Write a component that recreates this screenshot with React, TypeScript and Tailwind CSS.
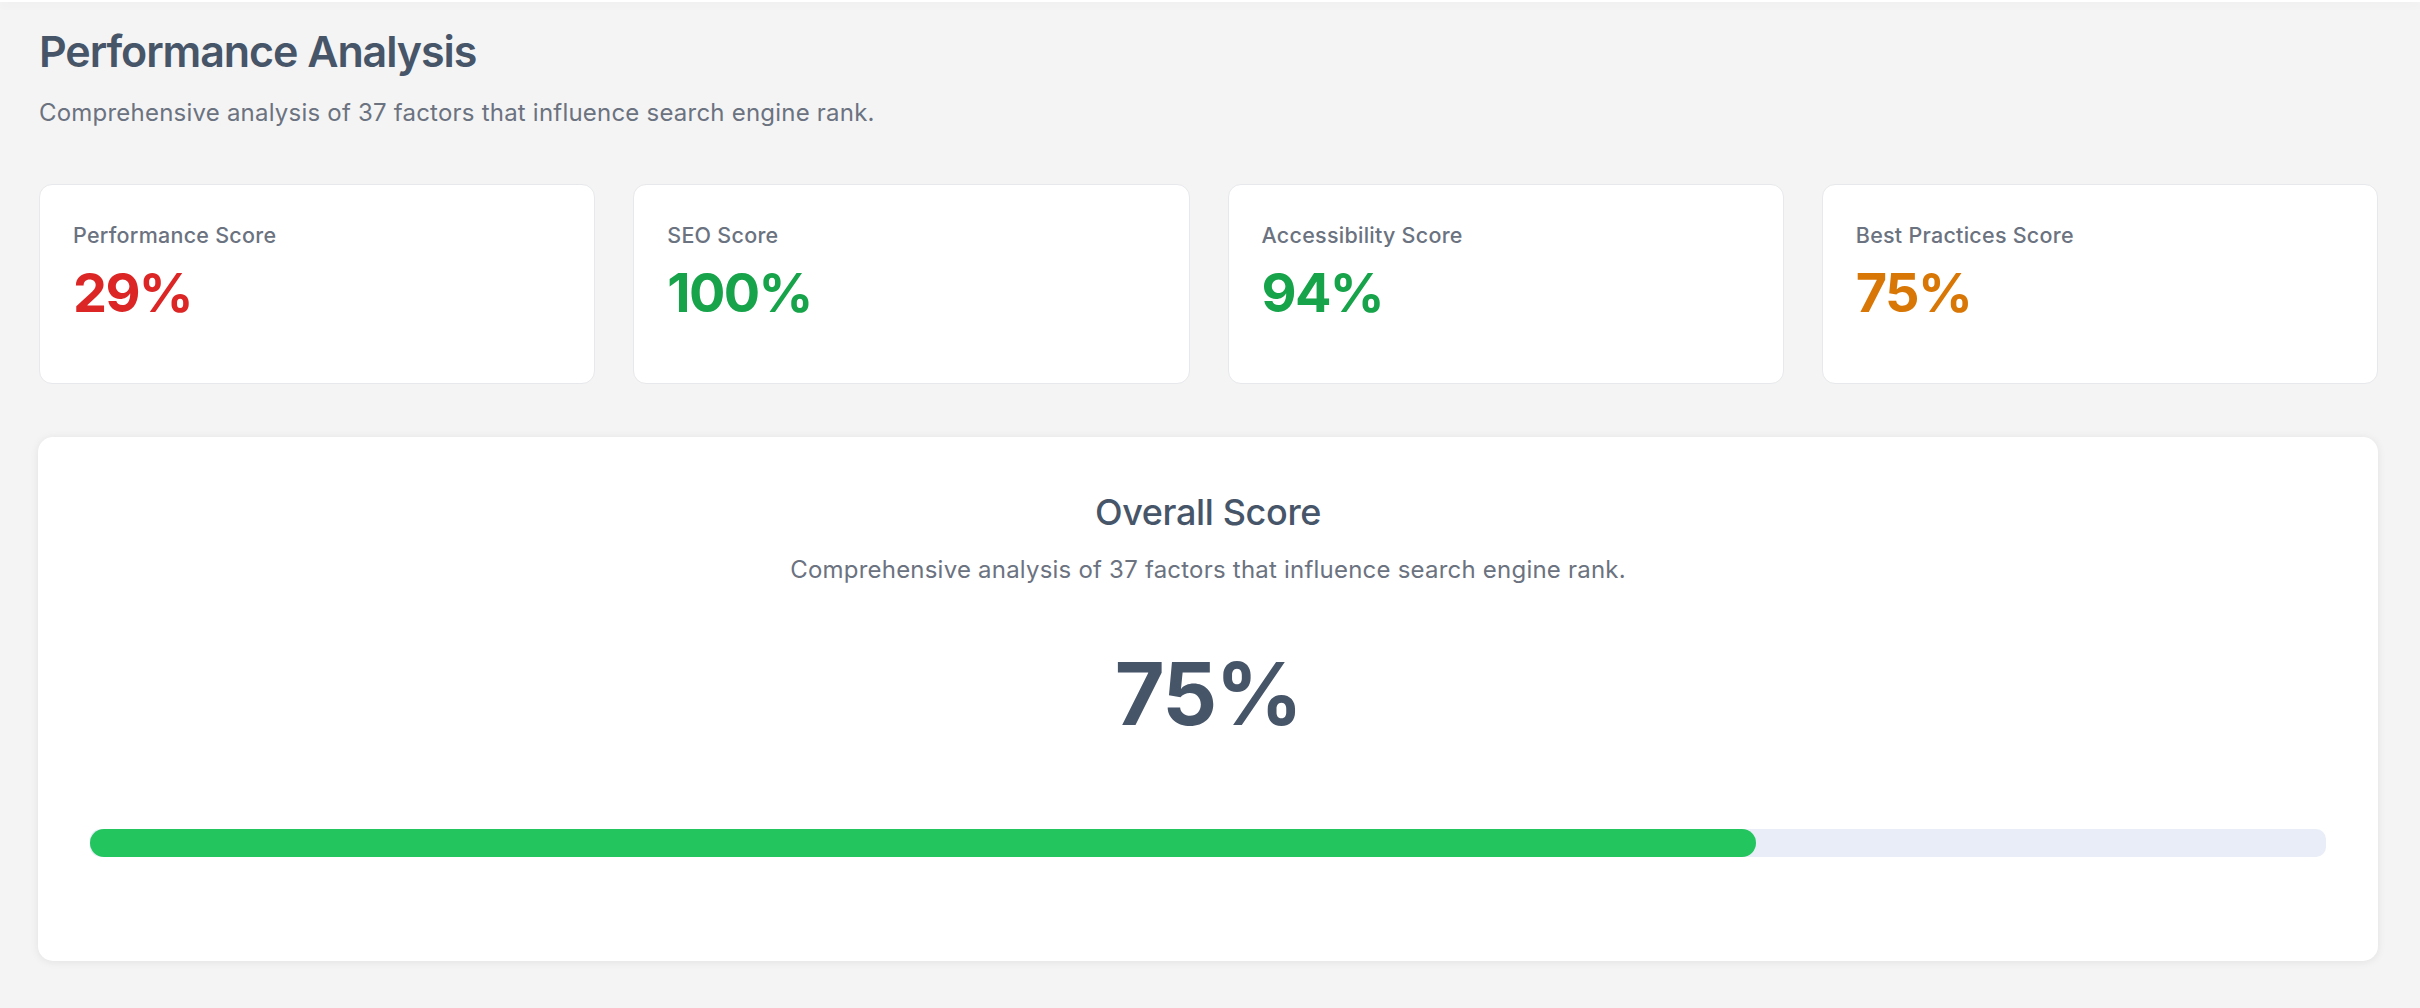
const scores = [
  { label: 'Performance Score', value: 29, color: 'text-[#dc2626]' },
  { label: 'SEO Score', value: 100, color: 'text-[#16a34a]' },
  { label: 'Accessibility Score', value: 94, color: 'text-[#16a34a]' },
  { label: 'Best Practices Score', value: 75, color: 'text-[#d97706]' },
]

const overall = 75
// the bar in the design stops a hair short of three quarters
const barFill = 74.5
const blurb = 'Comprehensive analysis of 37 factors that influence search engine rank.'

export default function App() {
  return (
    <div className="min-h-screen bg-[#f4f4f4] font-['Inter','Liberation_Sans',sans-serif]">
      {/* header edge, scrolled out of view */}
      <div className="relative z-10 h-[2px] bg-white shadow-[0_2px_10px_rgba(0,0,0,0.07)]" />

      <main className="pl-[38px] pr-[42px] pt-[23px] pb-10">
        <h1 className="pl-px text-[43px] leading-[52px] font-semibold tracking-[-0.025em] text-[#475569]">
          Performance Analysis
        </h1>
        <p className="pl-px mt-[18px] text-[24px] leading-[36px] tracking-[0.009em] text-[#6b7280]">{blurb}</p>

        {/* score cards */}
        <div className="mt-[53px] grid grid-cols-4 gap-[38px] pl-px">
          {scores.map((s) => (
            <div
              key={s.label}
              className="h-[200px] rounded-[13px] border border-[#e7e8eb] bg-white pt-[35px] px-[33px]"
            >
              <div className="text-[21.5px] leading-[30px] font-medium tracking-[0.012em] text-[#6b7280]">{s.label}</div>
              <div className={`mt-[11px] text-[54px] leading-[64px] font-bold tracking-[-0.03em] ${s.color}`}>{s.value}%</div>
            </div>
          ))}
        </div>

        {/* overall */}
        <section className="mt-[53px] rounded-[15px] bg-white px-[52px] pt-[50px] pb-[104px] shadow-[0_1px_8px_rgba(0,0,0,0.08)] text-center">
          <h2 className="text-[36px] leading-[50px] font-medium tracking-[-0.01em] text-[#475569]">Overall Score</h2>
          <p className="mt-[15px] text-[24px] leading-[36px] tracking-[0.009em] text-[#6b7280]">{blurb}</p>
          <div className="mt-[63px] text-[86px] leading-[86px] font-bold tracking-[-0.02em] text-[#475569]">{overall}%</div>
          <div className="mt-[92px] h-[28px] w-full rounded-[10px] bg-[#e8edf7]">
            <div className="h-full rounded-full bg-[#22c55e]" style={{ width: `${barFill}%` }} />
          </div>
        </section>
      </main>
    </div>
  )
}
